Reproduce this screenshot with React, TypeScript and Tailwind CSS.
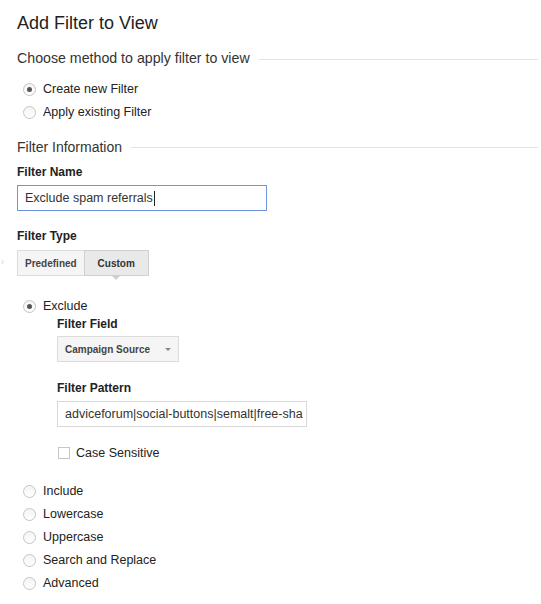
import React from "react";

function Radio({ checked, label }: { checked?: boolean; label: string }) {
  return (
    <div className="flex h-[23px] items-center">
      <span className="ml-[6px] flex h-[13px] w-[13px] items-center justify-center rounded-full border border-[#c4c4c4] bg-gradient-to-b from-[#f4f4f4] to-white">
        {checked && <span className="h-[5px] w-[5px] rounded-full bg-[#555]" />}
      </span>
      <span className="ml-[7px] text-[12.5px] text-[#222]">{label}</span>
    </div>
  );
}

export default function App() {
  return (
    <div
      className="w-[541px] h-[604px] bg-white pl-[17px] pr-[3px] text-[#333]"
      style={{ fontFamily: '"Liberation Sans", Arial, sans-serif' }}
    >
      <div className="flex h-[47px] items-center text-[18px] text-[#222]">Add Filter to View</div>

      <div className="flex h-[24px] items-center">
        <span className="text-[14.2px] text-[#333]">Choose method to apply filter to view</span>
        <span className="ml-[9px] h-px flex-1 bg-[#e3e3e3]" />
      </div>

      <div className="mt-[7px]">
        <Radio checked label="Create new Filter" />
        <Radio label="Apply existing Filter" />
      </div>

      <div className="mt-[11px] flex h-[24px] items-center">
        <span className="text-[14px] text-[#333]">Filter Information</span>
        <span className="ml-[9px] h-px flex-1 bg-[#e3e3e3]" />
      </div>

      <div className="mt-[5px] flex h-[16px] items-center text-[12px] font-bold text-[#222]">Filter Name</div>
      <div className="mt-[5px] flex h-[26px] w-[250px] items-center border border-[#6f95e0] px-[7px] text-[12.5px] text-[#333]">
        Exclude spam referrals<span className="ml-px h-[15px] w-px bg-[#222]" />
      </div>

      <div className="mt-[17px] flex h-[16px] items-center text-[12px] font-bold text-[#222]">Filter Type</div>
      <div className="-ml-[17px] mt-[6px] flex items-center">
        <span className="flex w-[17px] items-center justify-start pl-[1px] text-[9px] text-[#ccc]">›</span>
        <div className="flex h-[26px]">
          <div className="flex items-center border border-[#dcdcdc] bg-[#f5f5f5] px-[7px] text-[10px] font-bold text-[#444]">
            Predefined
          </div>
          <div className="relative -ml-px flex w-[65px] items-center justify-center border border-[#d0d0d0] bg-[#e9e9e9] text-[10px] font-bold text-[#333]">
            Custom
            <span className="absolute left-1/2 top-full -translate-x-1/2 border-x-[5px] border-t-[5px] border-x-transparent border-t-[#cfcfcf]" />
          </div>
        </div>
      </div>

      <div className="mt-[20px] flex h-[20px] items-center">
        <span className="ml-[6px] flex h-[13px] w-[13px] items-center justify-center rounded-full border border-[#c4c4c4] bg-gradient-to-b from-[#f4f4f4] to-white">
          <span className="h-[5px] w-[5px] rounded-full bg-[#555]" />
        </span>
        <span className="ml-[7px] text-[12.5px] text-[#222]">Exclude</span>
      </div>

      <div className="ml-[40px]">
        <div className="flex h-[16px] items-center text-[12px] font-bold text-[#222]">Filter Field</div>
        <div className="mt-[4px] flex h-[26px] w-[122px] items-center justify-between border border-[#dcdcdc] bg-[#f5f5f5] pl-[7px] pr-[7px] text-[10px] font-bold text-[#444]">
          <span>Campaign Source</span>
          <span className="mt-[1px] border-x-[3px] border-t-[3px] border-x-transparent border-t-[#888]" />
        </div>

        <div className="mt-[18px] flex h-[16px] items-center text-[12px] font-bold text-[#222]">Filter Pattern</div>
        <div className="mt-[5px] flex h-[26px] w-[250px] items-center overflow-hidden whitespace-nowrap border border-[#d9d9d9] px-[7px] text-[12.5px] text-[#333]">
          adviceforum|social-buttons|semalt|free-sha
        </div>

        <div className="mt-[16px] flex h-[20px] items-center">
          <span className="ml-px h-[12px] w-[12px] border border-[#c6c6c6] bg-white" />
          <span className="ml-[6px] text-[12.5px] text-[#222]">Case Sensitive</span>
        </div>
      </div>

      <div className="mt-[17px]">
        <Radio label="Include" />
        <Radio label="Lowercase" />
        <Radio label="Uppercase" />
        <Radio label="Search and Replace" />
        <Radio label="Advanced" />
      </div>
    </div>
  );
}
